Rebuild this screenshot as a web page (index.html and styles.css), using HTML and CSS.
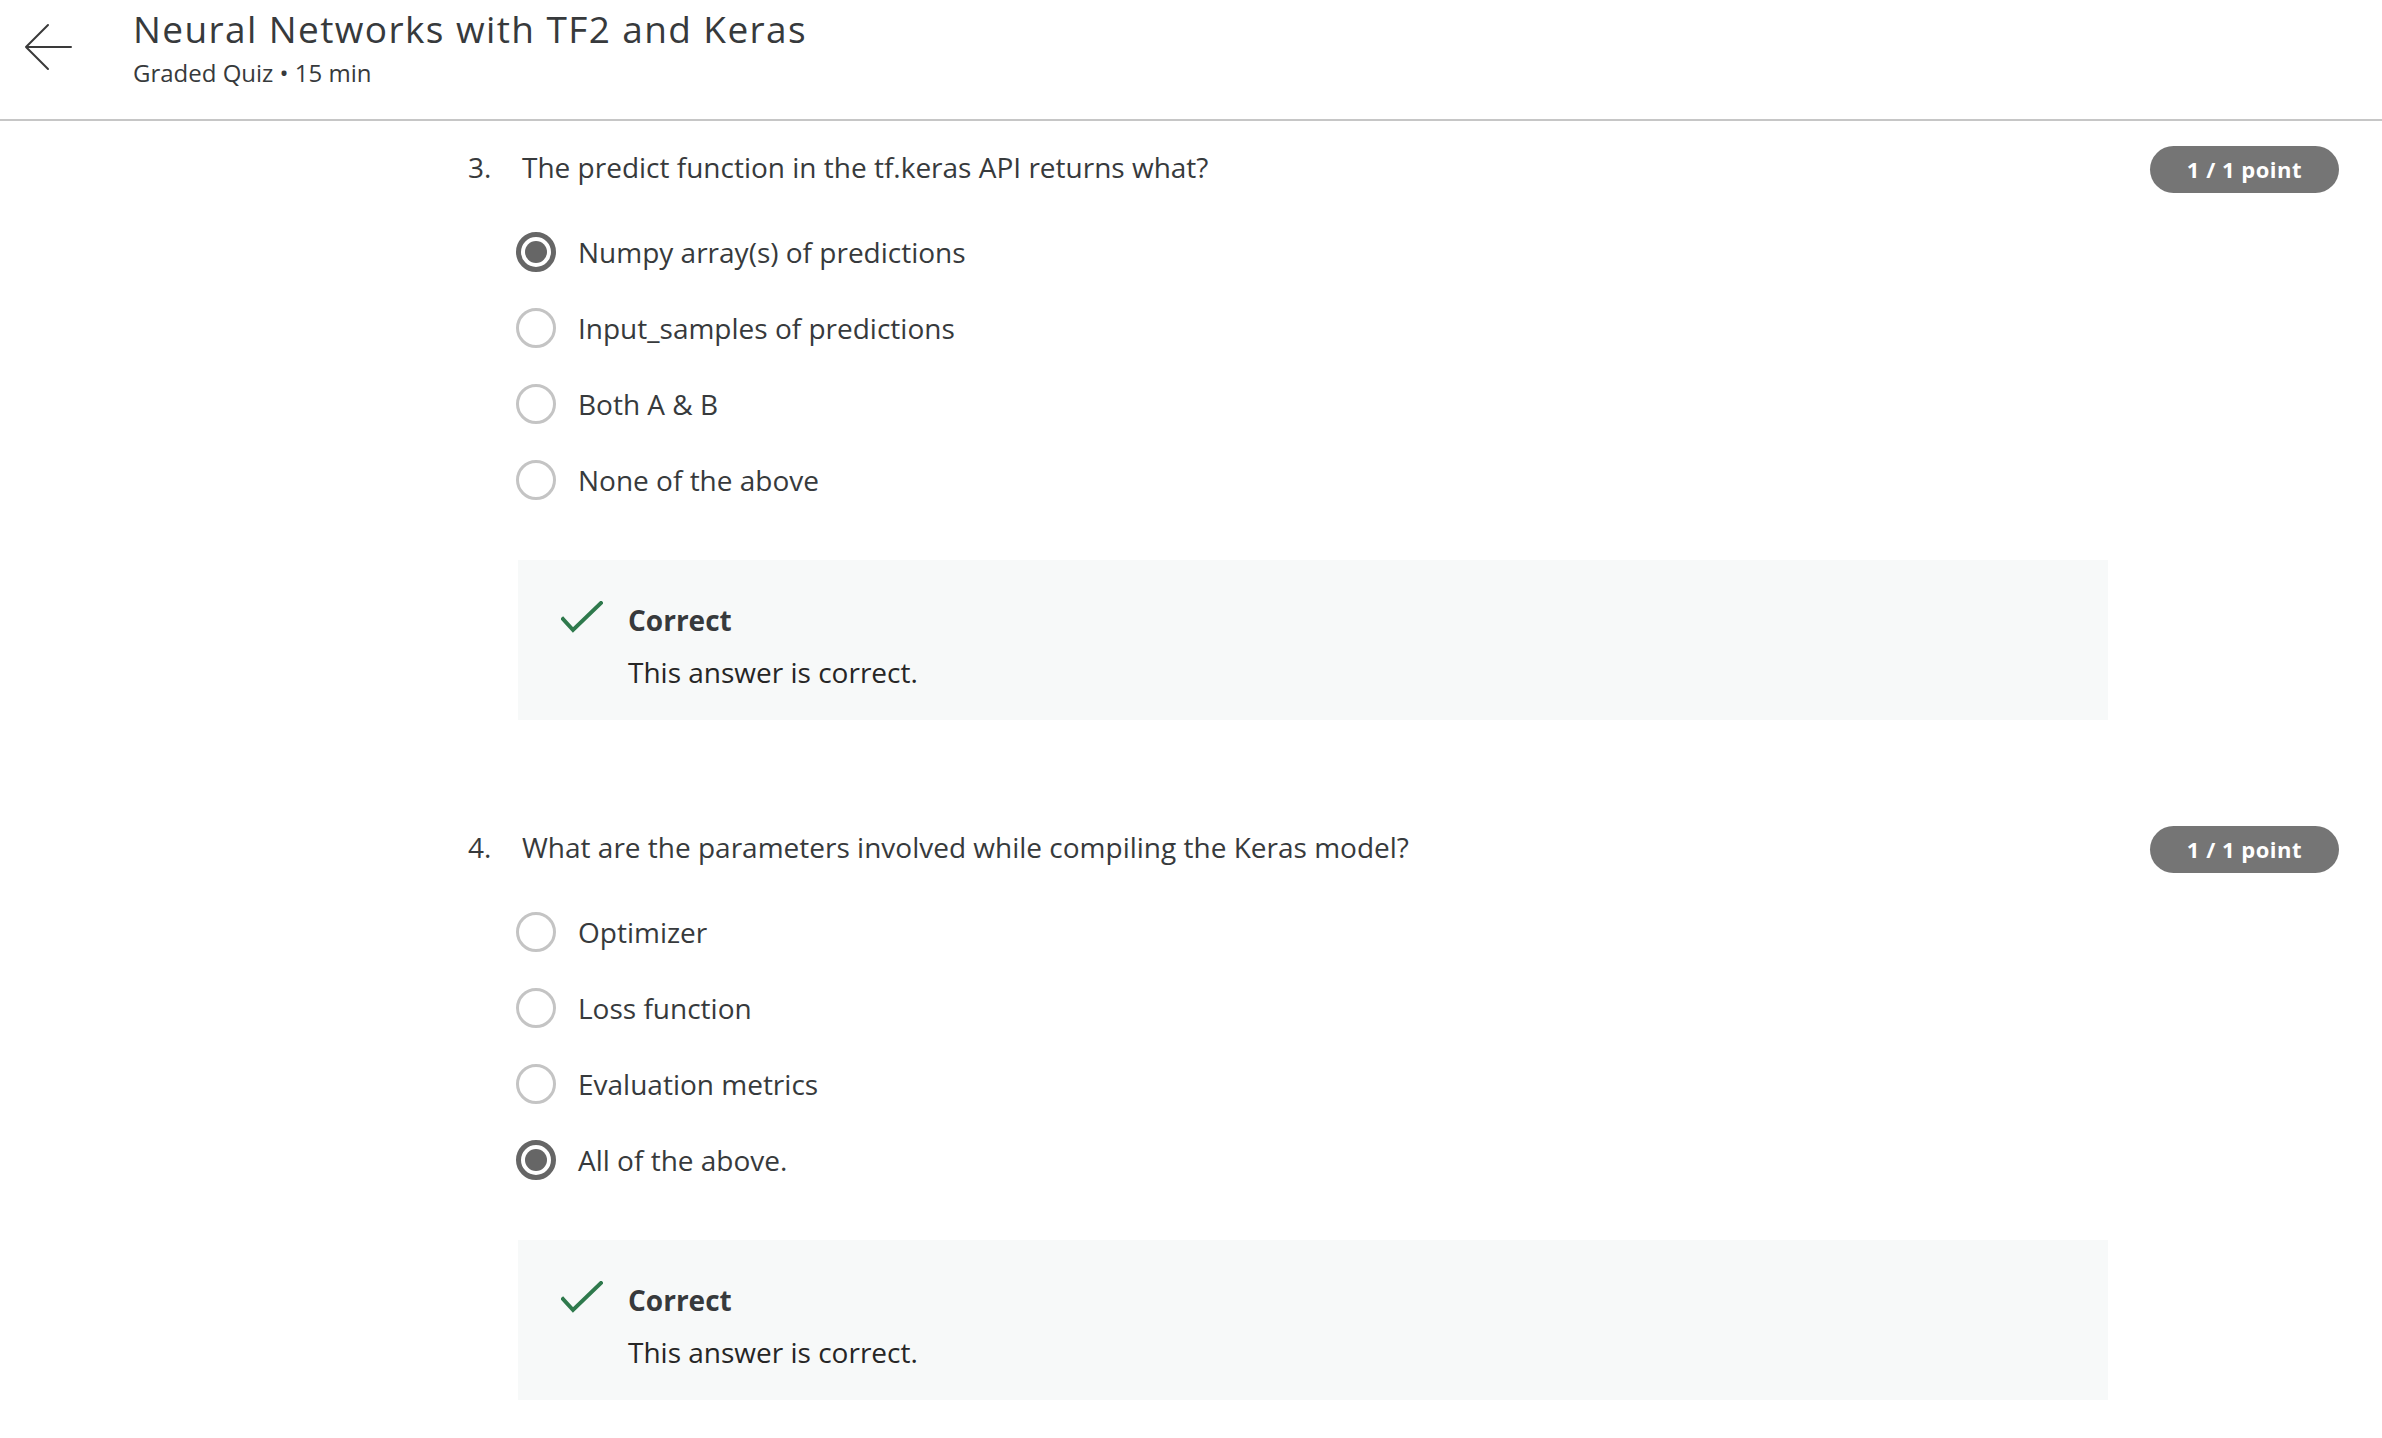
FILE: index.html
```html
<!DOCTYPE html>
<html lang="en">
<head>
<meta charset="utf-8">
<title>Neural Networks with TF2 and Keras</title>
<link rel="stylesheet" href="styles.css">
</head>
<body>
<header class="topbar">
  <div class="back">
    <svg width="48" height="48" viewBox="0 0 48 48" fill="none" stroke="#3a3a3a" stroke-width="2" stroke-linecap="round" stroke-linejoin="round">
      <path d="M47 24 H2 M24 2 L2 24 L24 46"/>
    </svg>
  </div>
  <div class="titles">
    <h1 class="title">Neural Networks with TF2 and Keras</h1>
    <div class="subtitle">Graded Quiz • 15 min</div>
  </div>
</header>

<main class="quiz">
  <section class="question">
    <div class="qhead">
      <div class="qtext"><span class="qnum">3.</span><span>The predict function in the tf.keras API returns what?</span></div>
      <div class="badge">1 / 1 point</div>
    </div>
    <ul class="options">
      <li class="option selected"><span class="radio"></span><span>Numpy array(s) of predictions</span></li>
      <li class="option"><span class="radio"></span><span>Input_samples of predictions</span></li>
      <li class="option"><span class="radio"></span><span>Both A &amp; B</span></li>
      <li class="option"><span class="radio"></span><span>None of the above</span></li>
    </ul>
    <div class="feedback">
      <svg class="check" width="42" height="32" viewBox="0 0 42 32" fill="none" stroke="#2f7a4d" stroke-width="4" stroke-linecap="square">
        <path d="M2 18 L12 29 L40 2"/>
      </svg>
      <div class="fbtext">
        <div class="fbtitle">Correct</div>
        <div class="fbbody">This answer is correct.</div>
      </div>
    </div>
  </section>

  <section class="question">
    <div class="qhead">
      <div class="qtext"><span class="qnum">4.</span><span>What are the parameters involved while compiling the Keras model?</span></div>
      <div class="badge">1 / 1 point</div>
    </div>
    <ul class="options">
      <li class="option"><span class="radio"></span><span>Optimizer</span></li>
      <li class="option"><span class="radio"></span><span>Loss function</span></li>
      <li class="option"><span class="radio"></span><span>Evaluation metrics</span></li>
      <li class="option selected"><span class="radio"></span><span>All of the above.</span></li>
    </ul>
    <div class="feedback">
      <svg class="check" width="42" height="32" viewBox="0 0 42 32" fill="none" stroke="#2f7a4d" stroke-width="4" stroke-linecap="square">
        <path d="M2 18 L12 29 L40 2"/>
      </svg>
      <div class="fbtext">
        <div class="fbtitle">Correct</div>
        <div class="fbbody">This answer is correct.</div>
      </div>
    </div>
  </section>
</main>
</body>
</html>
```
FILE: styles.css
```css
* { box-sizing: border-box; }
html, body { margin: 0; padding: 0; background: #fff; }
body {
  font-family: "Open Sans", "Noto Sans", sans-serif;
  color: #373a3c;
  overflow: hidden;
}
.topbar {
  display: flex;
  align-items: flex-start;
  height: 121px;
  border-bottom: 2px solid #c6c6c6;
  padding-top: 5px;
}
.back {
  width: 133px;
  padding-left: 24px;
  padding-top: 18px;
}
.back svg { display: block; }
.title {
  margin: 0;
  font-size: 37px;
  line-height: 48px;
  font-weight: 400;
  letter-spacing: 1.4px;
  color: #373a3c;
}
.subtitle {
  margin-top: 4px;
  font-size: 24px;
  line-height: 32px;
  color: #373a3c;
}
.quiz {
  padding: 0 43px 0 468px;
}
.question { padding-top: 25px; }
.question + .question { padding-top: 106px; }
.qhead {
  display: flex;
  align-items: center;
  justify-content: space-between;
  height: 47px;
}
.qtext {
  display: flex;
  font-size: 28px;
  line-height: 40px;
  padding-bottom: 5px;
}
.qnum { width: 54px; }
.badge {
  height: 47px;
  line-height: 46px;
  padding: 0 37px;
  border-radius: 24px;
  background: #757575;
  color: #fff;
  font-weight: 700;
  font-size: 22px;
  letter-spacing: 0.5px;
}
.options {
  list-style: none;
  margin: 21px 0 0 48px;
  padding: 0;
}
.option {
  display: flex;
  align-items: center;
  gap: 22px;
  height: 76px;
  font-size: 28px;
}
.radio {
  width: 40px;
  height: 40px;
  border-radius: 50%;
  border: 3px solid #c4c4c4;
  flex: none;
  position: relative;
}
.option.selected .radio {
  border: 5px solid #666;
}
.option.selected .radio::after {
  content: "";
  position: absolute;
  left: 4px;
  top: 4px;
  width: 22px;
  height: 22px;
  border-radius: 50%;
  background: #666;
}
.feedback {
  display: flex;
  align-items: flex-start;
  margin: 42px 0 0 50px;
  width: 1590px;
  height: 160px;
  background: #f7f9f9;
  padding: 40px 0 0 43px;
}
.check { margin-top: 1px; margin-right: 25px; flex: none; }
.fbtitle {
  font-size: 28px;
  line-height: 40px;
  font-weight: 700;
  color: #373a3c;
}
.fbbody {
  margin-top: 12px;
  font-size: 28px;
  line-height: 40px;
  color: #262626;
}
```
